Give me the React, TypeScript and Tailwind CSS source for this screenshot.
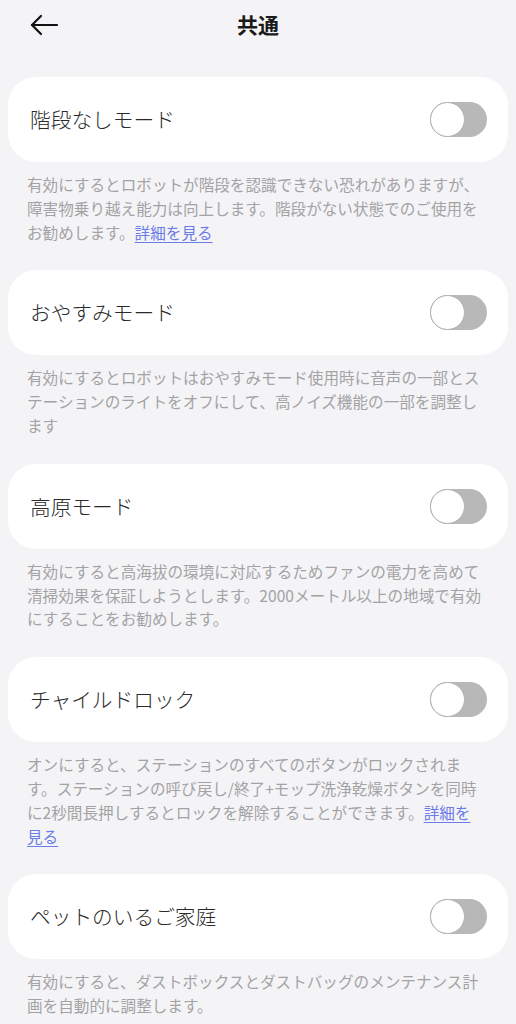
import React from "react";

type Item = {
  title: string;
  desc: string;
  link?: boolean;
};

const items: Item[] = [
  {
    title: "階段なしモード",
    desc: "有効にするとロボットが階段を認識できない恐れがありますが、障害物乗り越え能力は向上します。階段がない状態でのご使用をお勧めします。",
    link: true,
  },
  {
    title: "おやすみモード",
    desc: "有効にするとロボットはおやすみモード使用時に音声の一部とステーションのライトをオフにして、高ノイズ機能の一部を調整します",
  },
  {
    title: "高原モード",
    desc: "有効にすると高海拔の環境に対応するためファンの電力を高めて清掃効果を保証しようとします。2000メートル以上の地域で有効にすることをお勧めします。",
  },
  {
    title: "チャイルドロック",
    desc: "オンにすると、ステーションのすべてのボタンがロックされます。ステーションの呼び戻し/終了+モップ洗浄乾燥ボタンを同時に2秒間長押しするとロックを解除することができます。",
    link: true,
  },
  {
    title: "ペットのいるご家庭",
    desc: "有効にすると、ダストボックスとダストバッグのメンテナンス計画を自動的に調整します。",
  },
];

function Toggle() {
  return (
    <div className="relative h-[35px] w-[57px] shrink-0 rounded-full bg-[#b8b8b8]">
      <div className="absolute left-0 top-0 h-[35px] w-[35px] rounded-full border-[1.5px] border-[#b0b0b0] bg-white" />
    </div>
  );
}

export default function App() {
  return (
    <div
      className="min-h-[1024px] w-[516px] bg-[#f4f4f6] pb-6"
      style={{ fontFamily: '"Noto Sans CJK JP", "Noto Sans", sans-serif' }}
    >
      <header className="relative flex h-[50px] items-center justify-center">
        <svg
          className="absolute left-[29px] top-[13px]"
          width="30"
          height="24"
          viewBox="0 0 30 24"
          fill="none"
          stroke="#111"
          strokeWidth="2.2"
          strokeLinecap="round"
          strokeLinejoin="round"
        >
          <path d="M28 12H3" />
          <path d="M12 3L3 12L12 21" />
        </svg>
        <h1 className="text-[21px] font-bold text-[#1a1a1a]">共通</h1>
      </header>

      <div className="mt-[27px] flex flex-col gap-[26px]">
        {items.map((it) => (
          <section key={it.title}>
            <div className="mx-[8px] flex h-[85px] items-center justify-between rounded-[28px] bg-white pl-[22px] pr-[21px]">
              <span className="text-[20.7px] font-light text-[#2a2a2a]">{it.title}</span>
              <Toggle />
            </div>
            <p className="mt-[11px] pl-[27px] pr-[31px] text-[15.6px] leading-[23.8px] text-[#a3a3a5]">
              {it.desc}
              {it.link && (
                <a className="text-[#6b7ce8] underline underline-offset-[3px]">詳細を見る</a>
              )}
            </p>
          </section>
        ))}
      </div>
    </div>
  );
}
